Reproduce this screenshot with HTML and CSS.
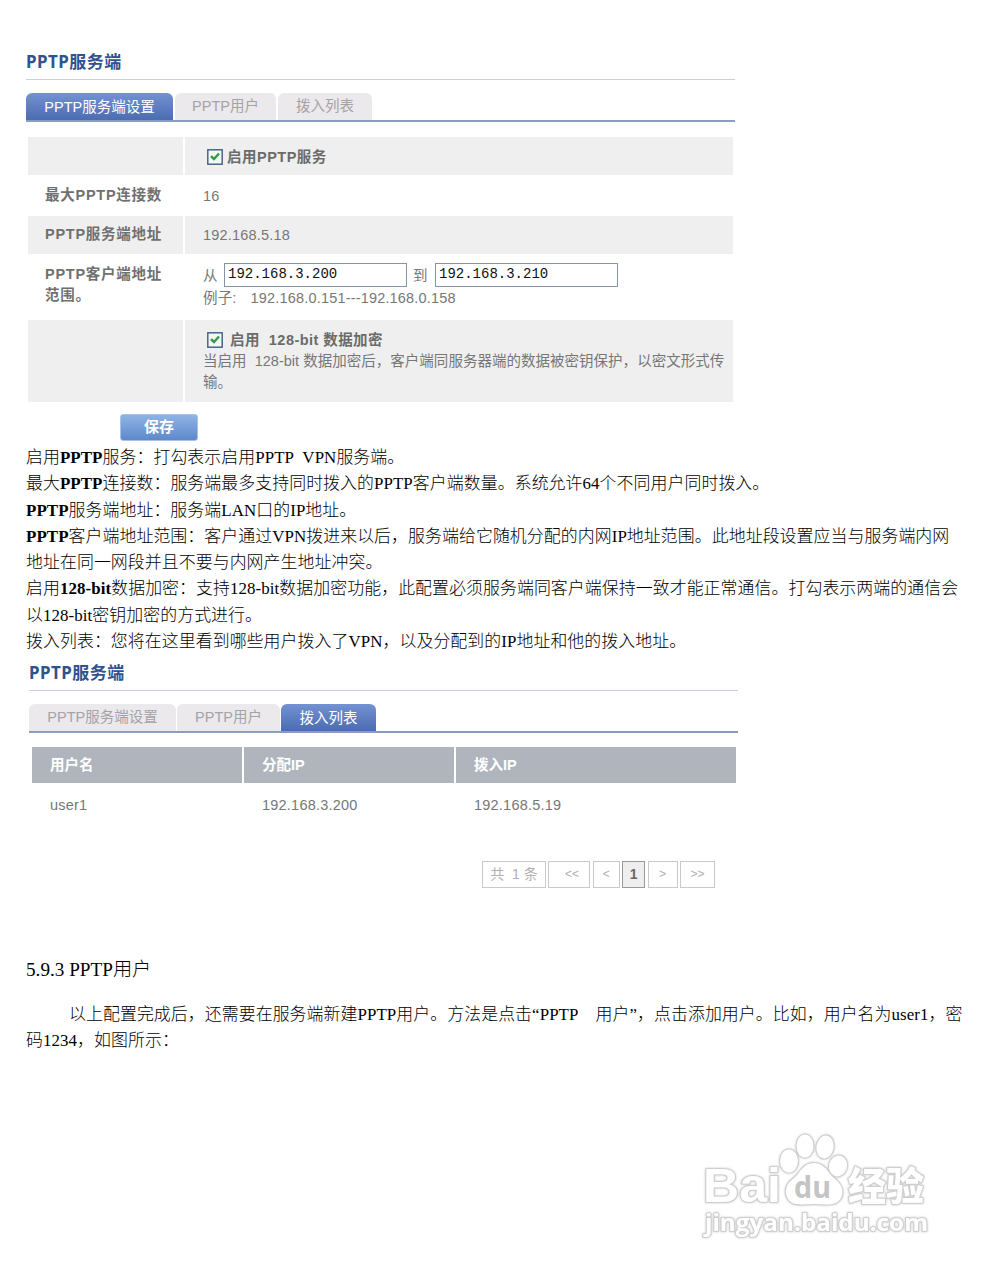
FILE: index.html
```html
<!DOCTYPE html>
<html lang="zh-CN">
<head>
<meta charset="utf-8">
<title>PPTP服务端</title>
<link rel="stylesheet" href="styles.css">
</head>
<body>
<main class="page">
  <section class="panel">
    <h2 class="title">PPTP服务端</h2>
    <nav class="tabs">
      <a class="tab t1 active">PPTP服务端设置</a>
      <a class="tab t2">PPTP用户</a>
      <a class="tab t3">拨入列表</a>
    </nav>
    <div class="form">
      <div class="row shade r1">
        <div class="label"></div>
        <div class="cell"><div class="check"><svg class="box" viewBox="0 0 16 16"><rect x=".8" y=".8" width="14.4" height="14.4" fill="#f3f8f1" stroke="#3b5d85" stroke-width="1.4"/><path d="M4 7.2 7 10l5-5.5" fill="none" stroke="#35994a" stroke-width="2.4"/></svg><b class="c1">启用PPTP服务</b></div></div>
      </div>
      <div class="row r2"><div class="label">最大PPTP连接数</div><div class="cell">16</div></div>
      <div class="row shade r3"><div class="label">PPTP服务端地址</div><div class="cell">192.168.5.18</div></div>
      <div class="row r4">
        <div class="label">PPTP客户端地址<br>范围。</div>
        <div class="cell">
          <div class="range"><span>从</span><span class="input">192.168.3.200</span><span>到</span><span class="input">192.168.3.210</span></div>
          <div class="example"><span>例子:</span><span>192.168.0.151---192.168.0.158</span></div>
        </div>
      </div>
      <div class="row shade r5">
        <div class="label"></div>
        <div class="cell">
          <div class="check"><svg class="box" viewBox="0 0 16 16"><rect x=".8" y=".8" width="14.4" height="14.4" fill="#f3f8f1" stroke="#3b5d85" stroke-width="1.4"/><path d="M4 7.2 7 10l5-5.5" fill="none" stroke="#35994a" stroke-width="2.4"/></svg><b class="c2">启用&nbsp; 128-bit 数据加密</b></div>
          <div class="note">当启用&nbsp; 128-bit 数据加密后，客户端同服务器端的数据被密钥保护，以密文形式传<br>输。</div>
        </div>
      </div>
    </div>
    <span class="save">保存</span>
  </section>

  <section class="prose">
    <p>启用<b>PPTP</b>服务：打勾表示启用PPTP&nbsp; VPN服务端。</p>
    <p>最大<b>PPTP</b>连接数：服务端最多支持同时拨入的PPTP客户端数量。系统允许64个不同用户同时拨入。</p>
    <p><b>PPTP</b>服务端地址：服务端LAN口的IP地址。</p>
    <p><b>PPTP</b>客户端地址范围：客户通过VPN拨进来以后，服务端给它随机分配的内网IP地址范围。此地址段设置应当与服务端内网<br>地址在同一网段并且不要与内网产生地址冲突。</p>
    <p>启用<b>128-bit</b>数据加密：支持128-bit数据加密功能，此配置必须服务端同客户端保持一致才能正常通信。打勾表示两端的通信会<br>以128-bit密钥加密的方式进行。</p>
    <p>拨入列表：您将在这里看到哪些用户拨入了VPN，以及分配到的IP地址和他的拨入地址。</p>
  </section>

  <section class="panel second">
    <h2 class="title">PPTP服务端</h2>
    <nav class="tabs">
      <a class="tab t1">PPTP服务端设置</a>
      <a class="tab t2">PPTP用户</a>
      <a class="tab t3 active">拨入列表</a>
    </nav>
    <div class="grid head"><span>用户名</span><span>分配IP</span><span>拨入IP</span></div>
    <div class="grid data"><span>user1</span><span>192.168.3.200</span><span>192.168.5.19</span></div>
    <div class="pager"><span class="p1">共&nbsp; 1 条</span><span class="p2">&lt;&lt;</span><span class="p3">&lt;</span><span class="p4">1</span><span class="p5">&gt;</span><span class="p6">&gt;&gt;</span></div>
  </section>

  <h3 class="heading">5.9.3 PPTP用户</h3>
  <section class="prose last">
    <p class="indent">以上配置完成后，还需要在服务端新建PPTP用户。方法是点击“PPTP<span class="gap"></span>用户”，点击添加用户。比如，用户名为user1，密</p>
    <p>码1234，如图所示：</p>
  </section>

  <svg class="mark" viewBox="0 0 260 130">
    <g class="halo">
      <text class="brand" x="13" y="82" textLength="78" lengthAdjust="spacingAndGlyphs">Bai</text>
      <ellipse cx="99" cy="41" rx="9" ry="11.5"/>
      <ellipse cx="115" cy="26" rx="8.5" ry="11.5"/>
      <ellipse cx="135" cy="27" rx="8.5" ry="11.5" transform="rotate(10 135 27)"/>
      <ellipse cx="148" cy="46" rx="9" ry="10.5" transform="rotate(15 148 46)"/>
      <path d="M124 43c-11 0-13 9-20 15-7 5-10 12-7 19 4 10 16 7 27 7s22 3 27-6c4-8 0-14-7-20s-9-15-20-15Z"/>
      <text class="cn" x="158" y="80" textLength="76" lengthAdjust="spacingAndGlyphs">经验</text>
      <text class="url" x="15" y="111" textLength="223" lengthAdjust="spacingAndGlyphs">jingyan.baidu.com</text>
    </g>
    <text class="du" x="104" y="78" textLength="37" lengthAdjust="spacingAndGlyphs">du</text>
  </svg>
</main>
</body>
</html>
```
FILE: styles.css
```css
* { box-sizing: border-box; }
body { margin: 0; background: #fff; }
.page { position: relative; width: 989px; height: 1280px; padding: 50px 0 0 26px; overflow: hidden; }
.panel { width: 709px; height: 395px; font: 14.5px/21px "Liberation Sans", "Noto Sans CJK SC", sans-serif; color: #777; white-space: nowrap; }
.title { margin: 0; height: 30px; border-bottom: 1px solid #ccd0da; font: bold 17px/24px "Noto Sans", "Noto Sans CJK SC", sans-serif; letter-spacing: .45px; color: #31528c; }
.tabs { display: flex; align-items: flex-end; gap: 2px; height: 42px; border-bottom: 2px solid #8b9cbd; }
.tab { height: 27px; border-radius: 6px 6px 0 0; background: #ebe9eb; color: #a5a2a8; text-align: center; line-height: 27px; }
.t1 { width: 147px; }
.t2 { width: 101px; }
.t3 { width: 94px; }
.tab.active { background: linear-gradient(#7292d2, #4c6cb1); color: #fff; line-height: 29px; }
.form { margin: 15px 2px 0; }
.row { display: grid; grid-template-columns: 155px 1fr; column-gap: 2px; }
.shade > div { background: #efefef; }
.label { padding-left: 17px; font-weight: bold; letter-spacing: .75px; color: #707070; }
.cell { padding-left: 18px; letter-spacing: .2px; }
.check { display: flex; align-items: center; padding-left: 4px; height: 21px; color: #6b6b6b; }
.box { width: 16px; height: 16px; margin-top: -2px; }
.c1 { margin-left: 4px; letter-spacing: .5px; }
.c2 { margin-left: 7px; letter-spacing: .45px; }
.r1 { height: 38px; }
.r1 .cell { padding-top: 10px; }
.r2 { height: 41px; line-height: 42px; }
.r3 { height: 37px; line-height: 38px; }
.r2 .label, .r3 .label { line-height: 37px; }
.r2 .label { line-height: 41px; }
.r4 { height: 67px; }
.r4 .label { padding-top: 11px; }
.r4 .cell { padding-top: 10px; }
.range { display: flex; align-items: center; height: 24px; }
.range > span:first-child { width: 21px; padding-top: 2px; }
.range > span:nth-child(3) { width: 28px; padding: 2px 0 0 6px; }
.range .input { width: 183px; height: 24px; padding-left: 3px; border: 1px solid #8296a8; background: #fff; color: #111; font: 14px/21px "Liberation Mono", monospace; letter-spacing: 0; }
.example { display: flex; gap: 14px; padding-top: 1px; letter-spacing: .18px; }
.r5 { height: 82px; }
.r5 .cell { padding-top: 10px; }
.note { letter-spacing: .02px; }
.save { display: block; width: 78px; height: 27px; margin: 12px 0 0 94px; border: 1px solid #a9c2e6; border-radius: 3px; background: linear-gradient(#8fb3e5, #5d89cb); color: #fff; text-align: center; font-size: 15px; font-weight: bold; line-height: 24px; }
.prose { font: 300 16.9px/26.3px "Liberation Serif", "Noto Sans CJK SC", serif; letter-spacing: .08px; color: #000; white-space: nowrap; }
.prose b { font-weight: 700; }
.prose p { margin: 0; }
.panel.second { margin: 6px 0 0 3px; height: 296px; }
.second .t2 { width: 103px; }
.second .t3 { width: 95px; }
.second .tabs { gap: 1px; height: 42px; }
.grid { display: grid; grid-template-columns: 210px 210px 280px; column-gap: 2px; margin-left: 3px; }
.grid span { padding-left: 18px; }
.head { height: 36px; margin-top: 14px; color: #fff; font-weight: bold; line-height: 36px; }
.head span { background: #afb4bd; }
.data { height: 42px; line-height: 44px; letter-spacing: .22px; }
.pager { display: flex; justify-content: flex-end; gap: 2.4px; margin: 36px 23px 0 0; }
.pager span { height: 27px; border: 1px solid #c9c9c9; color: #b0b0b0; text-align: center; line-height: 25px; font-size: 14px; }
.pager .p2, .pager .p3, .pager .p5, .pager .p6 { font-size: 12px; }
.pager .p2 { padding-left: 5px; }
.p1 { width: 64px; }
.p2 { width: 42px; }
.p3 { width: 27px; }
.pager .p4 { width: 23px; border-color: #999; background: #eee; color: #666; font-weight: bold; }
.p5 { width: 30px; }
.p6 { width: 35px; }
.heading { margin: 0; font: 300 19.2px/26px "Liberation Serif", "Noto Sans CJK SC", serif; color: #000; }
.last { margin-top: 19px; line-height: 26px; }
.indent { padding-left: 43px; }
.gap { display: inline-block; width: 17px; }
.mark { position: absolute; left: 690px; top: 1120px; width: 260px; height: 130px; }
.halo { fill: #fff; stroke: #cfcfcf; stroke-width: 2.2; paint-order: stroke; stroke-linejoin: round; filter: drop-shadow(0 0 1px #ccc); }
.brand { font: bold 49px "Liberation Sans", sans-serif; }
.cn { font: 900 39px "Noto Sans CJK SC", sans-serif; }
.url { font: bold 24px "Open Sans", sans-serif; }
.du { font: bold 31px "Open Sans", sans-serif; fill: #c4c4c4; }
```
